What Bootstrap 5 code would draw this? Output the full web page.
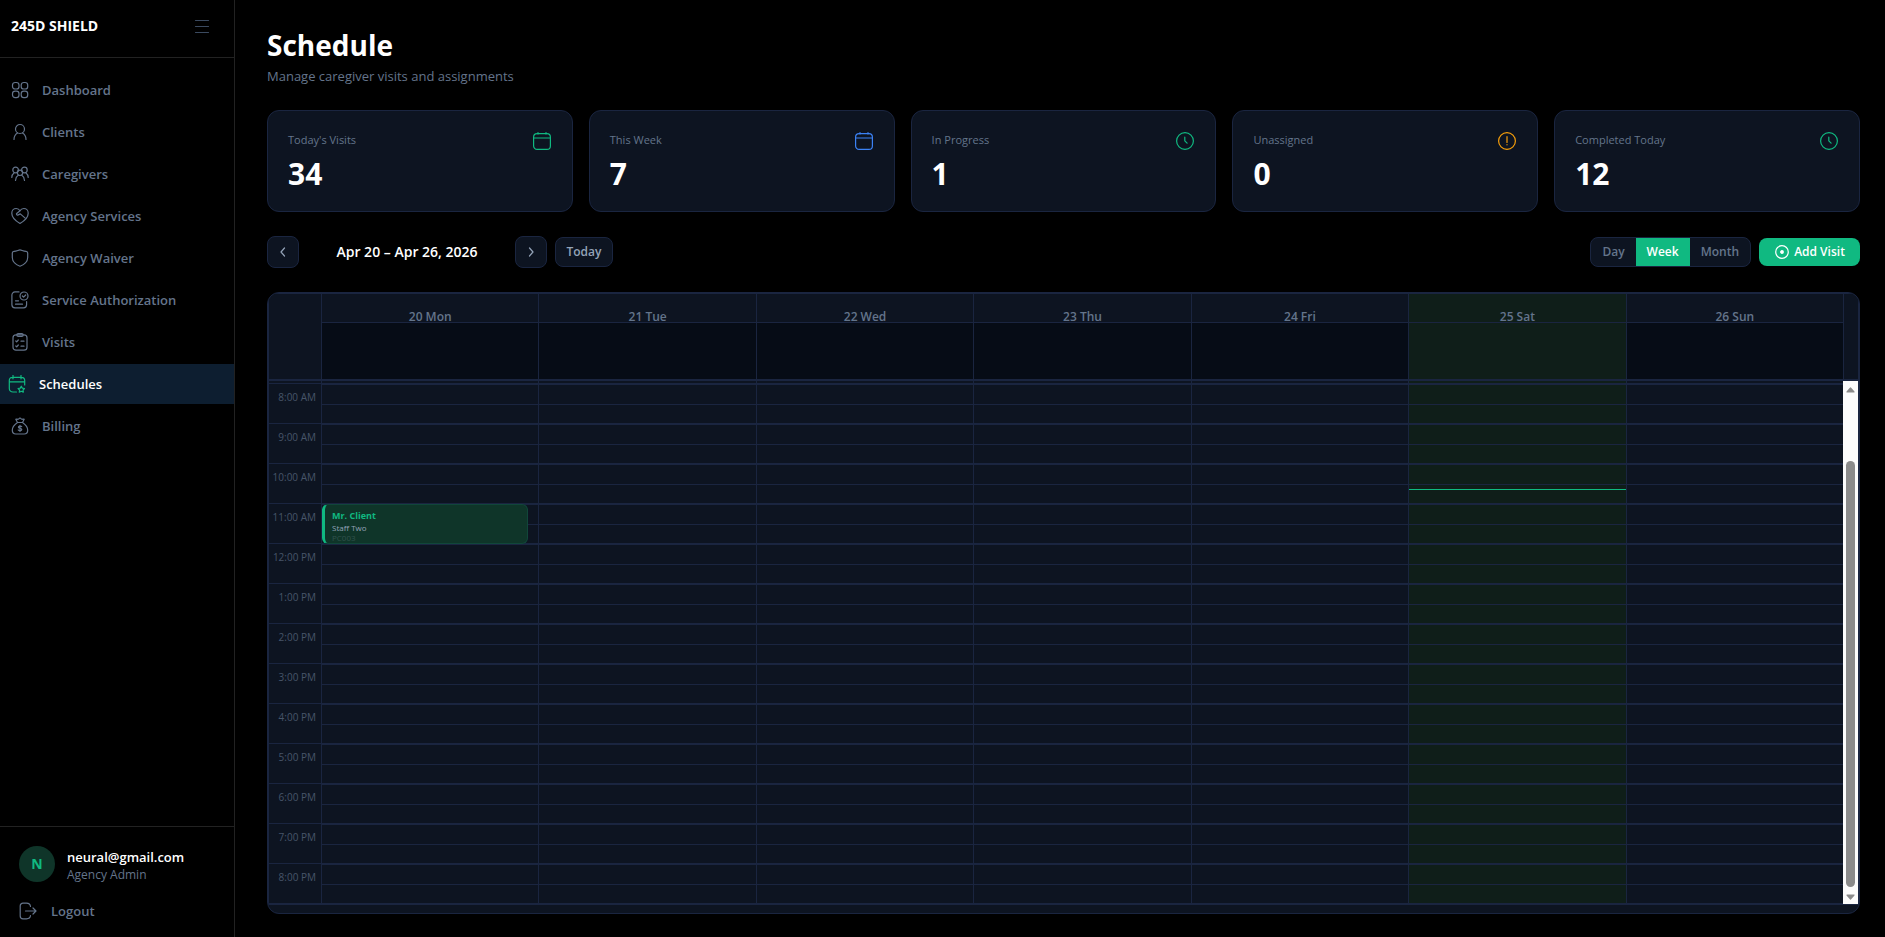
<!DOCTYPE html>
<html lang="en">
<head>
<meta charset="utf-8">
<meta name="viewport" content="width=device-width, initial-scale=1">
<title>Schedule – 245D Shield</title>
<link href="https://cdn.jsdelivr.net/npm/bootstrap@5.3.0/dist/css/bootstrap.min.css" rel="stylesheet">
<style>
:root{--panel:#0d1421;--line:#1a2540;--muted:#64748b;--accent:#10b981;--today:#0f1e19;--rule:#222}
body{background:#000;color:#fff;font-family:"Open Sans","Noto Sans",sans-serif;font-size:13px;line-height:20px}
svg{fill:none;stroke:currentColor;stroke-width:1.2;stroke-linecap:round;stroke-linejoin:round;flex:none}
.sidebar{width:235px;border-right:1px solid var(--rule)}
.brand-row{height:58px;border-bottom:1px solid var(--rule);padding:0 23px 6px 11px}
.brand-name{font-weight:700;font-size:14px}
.menu-btn{color:#3b4a60}
.side-nav{gap:2px;padding-top:12px}
.side-link{height:40px;padding-left:11px;gap:13px;color:var(--muted);font-weight:600;text-decoration:none}
.side-link.active{background:#0d1e30;color:#fff;padding-left:8px}
.side-link.active svg{color:var(--accent)}
.user-box{border-top:1px solid var(--rule);padding:18px 19px 16px;gap:18px}
.user-row{gap:12px}
.avatar{width:36px;height:36px;background:#0f3529;color:var(--accent);font-weight:700;font-size:14px}
.user-name{font-weight:600;line-height:20px;padding-top:2px}
.user-role{color:var(--muted);font-size:12px;line-height:16px}
.logout{color:var(--muted);font-weight:600;gap:14px}
.main-area{padding:28px 25px 23px 32px}
.page-title{font-size:28px;line-height:34px;font-weight:700}
.sub-title{color:var(--muted)}
.stats{display:grid;grid-template-columns:repeat(5,1fr);gap:16px}
.stat{background:var(--panel);border:1px solid var(--line);border-radius:12px;padding:20px}
.stat-label{color:var(--muted);font-size:11px;line-height:18px}
.stat-value{font-size:30px;line-height:34px;font-weight:700}
.tool{background:var(--panel);border:1px solid var(--line);color:#94a3b8;border-radius:8px;font-size:12px;line-height:16px;font-weight:600}
.tool.square{width:32px;height:32px}
.tool.word{width:58px;height:30px}
.range{width:200px;font-weight:600;font-size:14px}
.views{border:1px solid var(--line);border-radius:8px;background:var(--panel);height:30px}
.views button{border:0;background:none;color:var(--muted);font-size:12px;font-weight:600;padding:0 11px}
.views button.on{background:var(--accent);color:#fff}
.add-btn{border:0;background:var(--accent);color:#fff;border-radius:8px;height:28px;width:101px;font-size:12px;font-weight:600}
.cal{background:var(--panel);border:1px solid var(--line);border-radius:12px;padding-bottom:8px}
.cal-view{border:1px solid var(--line)}
.cal-head{border-bottom:2px solid var(--line)}
.gutter{width:52px}
.days{display:grid;grid-template-columns:repeat(7,minmax(0,1fr))}
.day{border-left:1px solid var(--line)}
.day.today{background:var(--today)}
.day-name{height:29px;padding-top:15px;line-height:16px;font-size:12px;font-weight:600;color:var(--muted);border-bottom:1px solid var(--line)}
.all-day{height:56px;background:#060c16}
.today .all-day{background:var(--today)}
.sb-space{width:15px;border-left:1px solid var(--line)}
.stub{height:3px;border-bottom:1px solid var(--line)}
.hour{height:40px;border-bottom:1px solid var(--line)}
.half{height:20px;border-top:1px solid var(--line)}
.gutter .hour{padding:3px 5px 0 0;font-size:10px;line-height:20px;color:#475569}
.now{top:108px;height:1px;background:var(--accent)}
.visit{top:123px;left:0;right:10px;height:40px;background:#0f3529;border:1px solid #11463a;border-left:3px solid var(--accent);border-radius:6px;padding:5px 7px 0;overflow:hidden}
.visit div{line-height:12px;font-size:8px;color:#94a3b8}
.visit .who{color:var(--accent);font-weight:700;font-size:9px}
.visit .code{line-height:8px;color:#31524d}
.sbar{width:15px;background:#fcfcfc;padding:6px 3px 4px}
.sbar svg{fill:#8b8b8b;stroke:#8b8b8b}
.thumb{background:#8b8b8b;border-radius:5px;margin:68px 0 7px}
</style>
</head>
<body>
<div class="d-flex min-vh-100">
  <aside class="sidebar d-flex flex-column flex-shrink-0">
    <div class="brand-row d-flex align-items-center justify-content-between">
      <span class="brand-name">245D SHIELD</span>
      <button class="menu-btn btn p-0 border-0 lh-1" aria-label="Toggle menu"><svg width="18" height="18" viewBox="0 0 18 18"><path d="M2.500 3.500h13M2.500 9.500h13M2.500 15.500h13"/></svg></button>
    </div>
    <nav class="side-nav d-flex flex-column flex-grow-1">
      <a href="#" class="side-link d-flex align-items-center"><svg width="18" height="18" viewBox="0 0 18 18"><rect x="1.500" y="1.500" width="6.500" height="6.500" rx="2.600"/><rect x="10.200" y="1.500" width="6.500" height="6.500" rx="2.600"/><rect x="1.500" y="10.200" width="6.500" height="6.500" rx="2.600"/><rect x="10.200" y="10.200" width="6.500" height="6.500" rx="2.600"/></svg>Dashboard</a>
      <a href="#" class="side-link d-flex align-items-center"><svg width="18" height="18" viewBox="0 0 18 18"><circle cx="9" cy="6" r="4.500"/><path d="M3 16.500c0-3.500 1.500-5.300 3.500-6.500M15 16.500c0-3.500-1.500-5.300-3.500-6.500"/></svg>Clients</a>
      <a href="#" class="side-link d-flex align-items-center"><svg width="18" height="18" viewBox="0 0 18 18"><circle cx="4.600" cy="5" r="2.800"/><circle cx="13.400" cy="5" r="2.800"/><circle cx="9" cy="7.800" r="2.700"/><path d="M.800 12.500c0-2 .800-3.500 2.200-4.500M17.200 12.500c0-2-.800-3.500-2.200-4.500M4.500 15.500c.200-2.500 1-4.200 2.700-5.200M13.500 15.500c-.200-2.500-1-4.200-2.700-5.200"/></svg>Caregivers</a>
      <a href="#" class="side-link d-flex align-items-center"><svg width="18" height="18" viewBox="0 0 18 18"><path d="M9 16.500C5.500 14.500.800 10.800.800 6.300.800 3.300 3 1.500 5.200 1.500c1.600 0 3 .8 3.800 2.200.8-1.400 2.200-2.200 3.800-2.200 2.200 0 4.400 1.800 4.400 4.800 0 4.500-4.700 8.200-8.200 10.200z"/><path d="M9 3.700 5.700 6.500c-.6.600 0 1.700 1 1.600l2.600-1.200 4.900 4.200"/></svg>Agency Services</a>
      <a href="#" class="side-link d-flex align-items-center"><svg width="18" height="18" viewBox="0 0 18 18"><path d="M9 .900c1.600 0 3 1.300 6 1.500 1 .1 1.700.7 1.700 1.700v4.400c0 4-3.600 7.400-7.700 8.700C4.900 15.900 1.300 12.500 1.300 8.500V4.100c0-1 .7-1.600 1.700-1.700 3-.2 4.400-1.500 6-1.500z"/></svg>Agency Waiver</a>
      <a href="#" class="side-link d-flex align-items-center"><svg width="18" height="18" viewBox="0 0 18 18"><path d="M8 .900H4C2.300.900.900 2.300.900 4v9.800c0 1.700 1.400 3 3.100 3h8.500c1.700 0 3.100-1.300 3.100-3V10.500M4.500 9.800h3M4.500 13.200h7"/><circle cx="13" cy="5" r="4"/><path d="m11.400 5 1.200 1.200L14.700 4"/></svg>Service Authorization</a>
      <a href="#" class="side-link d-flex align-items-center"><svg width="18" height="18" viewBox="0 0 18 18"><rect x="2" y="1.800" width="14" height="15.400" rx="3"/><rect x="5.800" y=".600" width="6.400" height="2.800" rx="1.400"/><path d="m4.800 8 .9.900L7.300 7M10 8.200h3M4.800 13l.9.900L7.300 12M10 13.200h3"/></svg>Visits</a>
      <a href="#" class="side-link active d-flex align-items-center" aria-current="page"><svg width="18" height="18" viewBox="0 0 18 18"><path d="M8.500 17H5c-2 0-3.700-1.200-3.700-3.500V5.500C1.300 3.500 2.500 2.300 4.500 2.300h9c2 0 3.200 1.200 3.200 3.200V10M1.300 6.800h15.400M5 .500v3.300M13 .500v3.300"/><path d="m13.300 11.200 1 1.900 2.200.4-1.500 1.600.3 2.100-2-.9-2 .9.300-2.100-1.500-1.600 2.200-.4z"/></svg>Schedules</a>
      <a href="#" class="side-link d-flex align-items-center"><svg width="18" height="18" viewBox="0 0 18 18"><path d="M6.500 5.500C3.500 7.500 1.300 10.500 1.300 13.300c0 2.500 1.400 3.700 3.500 3.700h8.400c2.100 0 3.500-1.200 3.500-3.700 0-2.800-2.200-5.800-5.200-7.800zM6.500 5.500 4.800 2.300c1-.6 1.800.4 2.700-.2L9 .900l1.500 1.200c.9.600 1.700-.4 2.700.2l-1.700 3.200"/><path d="M10.700 9.600c-.5-.7-3.300-.9-3.300.6 0 1.600 3.400.7 3.400 2.300 0 1.500-3 1.400-3.600.5M9 8.300v6.200"/></svg>Billing</a>
    </nav>
    <div class="user-box d-flex flex-column">
      <div class="user-row d-flex align-items-center">
        <div class="avatar rounded-circle d-flex align-items-center justify-content-center">N</div>
        <div><div class="user-name">neural@gmail.com</div><div class="user-role">Agency Admin</div></div>
      </div>
      <a href="#" class="logout d-flex align-items-center text-decoration-none"><svg width="18" height="18" viewBox="0 0 18 18"><path d="M11.500 4.500C11.300 2.500 10 1.200 7.500 1.200H4C2.300 1.200 1.200 2.300 1.200 4v10c0 1.700 1.100 2.800 2.800 2.800h3.500c2.500 0 3.800-1.300 4-3.300M6.500 9h10.500M14 6l3 3-3 3"/></svg>Logout</a>
    </div>
  </aside>

  <main class="main-area flex-grow-1">
    <h1 class="page-title m-0">Schedule</h1>
    <p class="sub-title mb-0 mt-1">Manage caregiver visits and assignments</p>

    <section class="stats mt-4">
      <div class="stat d-flex justify-content-between"><div><div class="stat-label mb-2">Today's Visits</div><div class="stat-value">34</div></div><svg width="20" height="20" viewBox="0 0 20 20" style="color:#10b981"><use href="#i-cal"/></svg></div>
      <div class="stat d-flex justify-content-between"><div><div class="stat-label mb-2">This Week</div><div class="stat-value">7</div></div><svg width="20" height="20" viewBox="0 0 20 20" style="color:#3b82f6"><use href="#i-cal"/></svg></div>
      <div class="stat d-flex justify-content-between"><div><div class="stat-label mb-2">In Progress</div><div class="stat-value">1</div></div><svg width="20" height="20" viewBox="0 0 20 20" style="color:#10b981"><use href="#i-clock"/></svg></div>
      <div class="stat d-flex justify-content-between"><div><div class="stat-label mb-2">Unassigned</div><div class="stat-value">0</div></div><svg width="20" height="20" viewBox="0 0 20 20" style="color:#f59e0b"><circle cx="10" cy="10" r="8.400"/><path d="M10 5.500v6M10 13.700v.1"/></svg></div>
      <div class="stat d-flex justify-content-between"><div><div class="stat-label mb-2">Completed Today</div><div class="stat-value">12</div></div><svg width="20" height="20" viewBox="0 0 20 20" style="color:#10b981"><use href="#i-clock"/></svg></div>
    </section>

    <div class="d-flex align-items-center justify-content-between mt-4 mb-4">
      <div class="d-flex align-items-center gap-2">
        <button class="tool square p-0 d-flex align-items-center justify-content-center" aria-label="Previous week"><svg width="14" height="14" viewBox="0 0 14 14"><path d="M8.500 3 5 7l3.500 4"/></svg></button>
        <div class="range text-center">Apr 20 – Apr 26, 2026</div>
        <button class="tool square p-0 d-flex align-items-center justify-content-center" aria-label="Next week"><svg width="14" height="14" viewBox="0 0 14 14"><path d="M5.500 3 9 7l-3.500 4"/></svg></button>
        <button class="tool word p-0">Today</button>
      </div>
      <div class="d-flex align-items-center gap-2">
        <div class="views d-flex overflow-hidden"><button>Day</button><button class="on">Week</button><button>Month</button></div>
        <button class="add-btn p-0 d-flex align-items-center justify-content-center"><svg class="me-1" width="16" height="16" viewBox="0 0 16 16"><circle cx="8" cy="8" r="6.300"/><circle cx="8" cy="8" r="1.300" fill="currentColor"/></svg>Add Visit</button>
      </div>
    </div>

    <section class="cal overflow-hidden" aria-label="Week calendar">
      <div class="cal-view">
        <div class="cal-head d-flex"><div class="gutter"></div><div class="days flex-grow-1" id="head"></div><div class="sb-space"></div></div>
        <div class="d-flex">
          <div class="gutter text-end" id="hours"><div class="stub"></div></div>
          <div class="days flex-grow-1" id="cols"></div>
          <div class="sbar d-flex flex-column"><svg width="9" height="6" viewBox="0 0 9 6"><path d="M4.500 1 8 5H1z"/></svg><div class="thumb flex-grow-1"></div><svg width="9" height="6" viewBox="0 0 9 6"><path d="M4.500 5 8 1H1z"/></svg></div>
        </div>
      </div>
    </section>
  </main>
</div>
<svg width="0" height="0" class="position-absolute"><defs>
  <g id="i-cal"><rect x="1.600" y="2.600" width="16.800" height="15.800" rx="3.500"/><path d="M1.600 7h16.800M6 1.500v1.500M14 1.500v1.500"/></g>
  <g id="i-clock"><circle cx="10" cy="10" r="8.400"/><path d="M9.800 6.200v3.600l2.300 2.300"/></g>
</defs></svg>
<script src="https://cdn.jsdelivr.net/npm/bootstrap@5.3.0/dist/js/bootstrap.bundle.min.js"></script>
<script>
const days = ['20 Mon','21 Tue','22 Wed','23 Thu','24 Fri','25 Sat','26 Sun'];
const hours = ['8:00 AM','9:00 AM','10:00 AM','11:00 AM','12:00 PM','1:00 PM','2:00 PM','3:00 PM','4:00 PM','5:00 PM','6:00 PM','7:00 PM','8:00 PM'];
const visit = '<div class="visit position-absolute"><div class="who">Mr. Client</div><div>Staff Two</div><div class="code">PC003</div></div>';
const now = '<div class="now position-absolute start-0 end-0"></div>';
const slots = '<div class="hour"><div class="half"></div><div class="half"></div></div>'.repeat(hours.length);
document.getElementById('head').innerHTML = days.map((d, i) =>
  `<div class="day ${i === 5 ? 'today' : ''}"><div class="day-name text-center">${d}</div><div class="all-day"></div></div>`).join('');
document.getElementById('hours').innerHTML += hours.map(h => `<div class="hour">${h}</div>`).join('');
document.getElementById('cols').innerHTML = days.map((d, i) =>
  `<div class="day position-relative ${i === 5 ? 'today' : ''}"><div class="stub"></div>${slots}${i === 0 ? visit : ''}${i === 5 ? now : ''}</div>`).join('');
</script>
</body>
</html>
